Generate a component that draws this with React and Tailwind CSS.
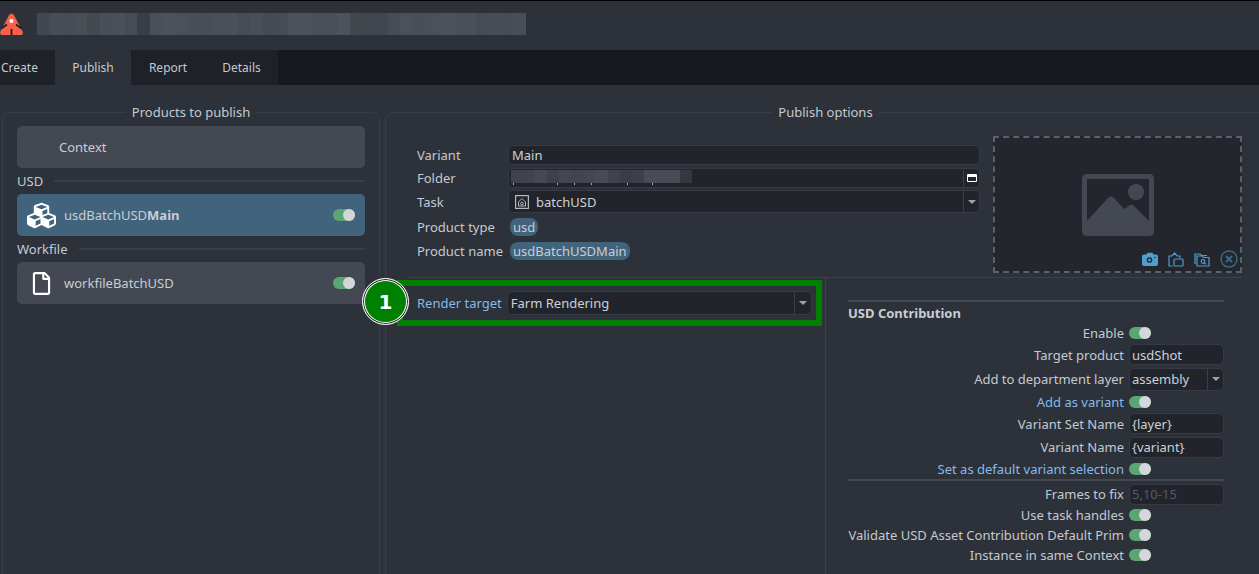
import React from "react";
import { FaCubes, FaRegFile } from "react-icons/fa";

const mosaicA = ["#43474f","#484c55","#474b54","#4a4e57","#44484f","#4a4e57","#4b4f58","#474b53"];
const mosaicDark = ["#393d45"];
const mosaicB = ["#4b4f58","#4d515a","#4c5059","#4a4e57","#494d56","#4b4f58","#4c5059","#474b54","#4a4e57","#464a52","#474b54","#4d515a","#4d515a","#4a4e57","#4b4f58","#4e525a","#43474e","#42464e","#42464e","#474b53","#4c5059","#4a4e57","#4c5059","#4d515a","#4c5059","#4b4f58","#474b54","#484c55","#474b54","#4a4e57"];
const folderMosaic = ["#3f434b","#40444c","#454952","#3d4149","#43474f","#41454d","#43474f","#474b53","#3f434b","#393d45","#3c4048","#494c54","#494c54","#494c54","#35393f"];
const ticks = ["ml-[2px]","ml-[43px]","ml-[16px]","ml-[16px]","ml-[35px]","ml-[24px]"];

function Toggle() {
  return (
    <div className="flex h-[12px] w-[22px] shrink-0 items-center justify-end rounded-full bg-[#5ba572]">
      <div className="h-[12px] w-[12px] rounded-full bg-[#d4d6dc]" />
    </div>
  );
}

function Caret() {
  return <div className="h-0 w-0 border-x-[4px] border-t-[4px] border-x-transparent border-t-[#9da1a9]" />;
}

function Field({ children, className = "" }) {
  return <div className={`flex items-center rounded-[5px] border border-[#353a45] bg-[#21252b] ${className}`}>{children}</div>;
}

function Select({ label, className = "", labelClass = "", arrowW = "w-[17px]" }) {
  return (
    <Field className={className}>
      <span className={`flex-1 text-[#ccd0d7] ${labelClass}`}>{label}</span>
      <div className={`flex h-full ${arrowW} items-center justify-center border-l border-[#3a3f4a]`}><Caret /></div>
    </Field>
  );
}

function Divider({ title }) {
  return (
    <div className="flex h-[26px] items-center gap-[11px] text-[#c5c9d0]">
      <span>{title}</span>
      <div className="h-[2px] flex-1 bg-[#383d48]" />
    </div>
  );
}

function Product({ icon, children, active }) {
  return (
    <div className={`flex h-[42px] items-center rounded-[5px] ${active ? "bg-[#41637b]" : "bg-[#434853]"} pr-[10px]`}>
      <div className="flex w-[47px] justify-center pl-[1px] text-white">{icon}</div>
      <span className="flex-1 text-[#c9cdd4]">{children}</span>
      <Toggle />
    </div>
  );
}

function Row({ label, h, blue, children }) {
  return (
    <div className={`flex items-center justify-end ${h}`}>
      <span className={`whitespace-nowrap ${blue ? "text-[#85bbe8]" : "text-[#c5c9d0]"}`}>{label}</span>
      <div className="ml-[5px] flex w-[95px] items-center">{children}</div>
    </div>
  );
}

function FormRow({ label, h, children }) {
  return (
    <div className={`flex items-center ${h}`}>
      <span className="w-[91px] shrink-0 whitespace-nowrap text-[#c5c9d0]">{label}</span>
      {children}
    </div>
  );
}

function Pill({ children }) {
  return <span className="rounded-[8px] bg-[#41637b] px-[3px] leading-[17px] text-[#c9cdd4]">{children}</span>;
}

function Logo() {
  return (
    <svg width="23" height="23" viewBox="0 0 23 23" className="shrink-0">
      <path d="M9 2.200 Q11.500 -1 14 2.200 L22.400 18 Q24 22 20 22 L3 22 Q-1 22 .6 18 Z" fill="#f9604a" />
      <circle cx="11.500" cy="8" r="2" fill="#fff" />
      <path d="M1.500 15.500 L7 11.500 M21.500 15.500 L16 11.500 M11.500 16 V22" stroke="#1d1f25" strokeWidth="1.800" fill="none" />
    </svg>
  );
}

function ImagePlaceholder() {
  return (
    <svg width="72" height="62" viewBox="0 0 72 62">
      <path fillRule="evenodd" d="M5 0H67Q72 0 72 5V57Q72 62 67 62H5Q0 62 0 57V5Q0 0 5 0ZM5 5V47L26 24Q29 21 32 24L42 35L48 31Q50 30 52 32L67 47V5Z" fill="#434853" />
      <circle cx="54" cy="18" r="8" fill="#434853" />
    </svg>
  );
}

function CameraIcon() {
  return (
    <svg width="16" height="14" viewBox="0 0 16 14">
      <path d="M2 2.500H4.500L5.500 .8H10.500L11.500 2.500H14Q16 2.500 16 4.500V12Q16 14 14 14H2Q0 14 0 12V4.500Q0 2.500 2 2.500Z" fill="#4f9fcf" />
      <circle cx="7.500" cy="8" r="2.800" fill="#21252b" />
      <circle cx="7.500" cy="8" r="1.500" fill="#4f9fcf" />
      <circle cx="13" cy="5.500" r=".8" fill="#21252b" />
    </svg>
  );
}

function ClipIcon() {
  return (
    <svg width="16" height="15" viewBox="0 0 16 15" fill="none" stroke="#4f9fcf" strokeWidth="1.200">
      <path d="M4.500 14H1V4H4L6.500 1L9 4H12V6" />
      <rect x="6" y="7" width="9" height="7" rx="1" />
    </svg>
  );
}

function FolderIcon() {
  return (
    <svg width="16" height="15" viewBox="0 0 16 15" fill="none" stroke="#4f9fcf" strokeWidth="1.200">
      <path d="M1 12V2H6L7.500 3.500H13" />
      <path d="M3 14V4H8L9.500 5.500H15V14Z" />
      <circle cx="9" cy="9.500" r="1.800" />
      <path d="M10.300 10.800L12 12.300" />
    </svg>
  );
}

function CloseIcon() {
  return (
    <svg width="18" height="18" viewBox="0 0 18 18" fill="none" stroke="#3a6a86">
      <circle cx="9" cy="9" r="8" strokeWidth="1.400" />
      <path d="M6 6L12 12M12 6L6 12" strokeWidth="2" />
    </svg>
  );
}

function TaskIcon() {
  return (
    <svg width="14" height="14" viewBox="0 0 14 14" fill="none" stroke="#b4b8c0" className="mr-[7px] ml-[6px]">
      <rect x=".5" y=".5" width="13" height="13" strokeWidth="1" fill="#434853" />
      <rect x="2" y="2" width="10" height="10" strokeWidth="0" fill="#21252b" />
      <path d="M3.500 11V7L7 3.500L10.500 7V11Z" strokeWidth="1" />
      <circle cx="7" cy="8.500" r="1.300" strokeWidth="1" />
    </svg>
  );
}

export default function App() {
  return (
    <div className="relative h-[574px] w-[1259px] overflow-hidden border-t border-black bg-[#2c313a] text-[13px] leading-[18px] font-['Noto_Sans',sans-serif]">
      <header className="flex h-[49px] items-start pt-[12px]">
        <Logo />
        <div className="ml-[14px] flex h-[22px] w-[489px] overflow-hidden">
          {[...mosaicA, ...mosaicDark, ...mosaicB].map((c, i) => (
            <div key={i} className="h-full flex-1" style={{ backgroundColor: c }} />
          ))}
        </div>
      </header>

      <nav className="flex h-[35px] bg-[#16191d] text-[12px] text-[#c5c9d0]">
        <div className="flex w-[55px] items-center bg-[#1e2128] pl-[1px]">Create</div>
        <div className="flex w-[76px] items-center justify-center bg-[#2c313a]">Publish</div>
        <div className="flex w-[74px] items-center justify-center bg-[#1e2128]">Report</div>
        <div className="flex w-[73px] items-center justify-center bg-[#1e2128]">Details</div>
      </nav>

      <main className="flex gap-[5px] pt-[18px] pl-[2px]">
        <fieldset className="h-[480px] w-[378px] shrink-0 rounded-[8px] border border-[#383d48] px-[14px]">
          <legend className="mx-auto px-[6px] text-[#c5c9d0]">Products to publish</legend>
          <div className="pt-[5px]">
            <div className="flex h-[42px] items-center rounded-[5px] bg-[#434853] pl-[42px] text-[#c9cdd4]">Context</div>
            <Divider title="USD" />
            <Product active icon={<FaCubes size={29} />}>usdBatchUSD<b className="font-bold">Main</b></Product>
            <Divider title="Workfile" />
            <Product icon={<FaRegFile size={23} />}>workfileBatchUSD</Product>
          </div>
        </fieldset>

        <fieldset className="h-[480px] w-[880px] shrink-0 rounded-tl-[8px] border-t border-l border-[#383d48]">
          <legend className="mx-auto px-[6px] text-[#c5c9d0]">Publish options</legend>

          <div className="ml-[22px] flex h-[157px] w-[834px] border-b border-[#3b404b] pt-[22px]">
            <div className="ml-[9px] w-[576px] shrink-0">
              <FormRow label="Variant" h="h-[23px]">
                <Field className="h-[20px] w-[472px] pl-[3px] text-[#ccd0d7]">Main</Field>
              </FormRow>
              <FormRow label="Folder" h="h-[23px]">
                <Field className="h-[20px] w-[472px] overflow-hidden pl-[2px]">
                  <div className="w-[181px]">
                    <div className="flex h-[13px]">
                      {folderMosaic.map((c, i) => <div key={i} className="h-full flex-1" style={{ backgroundColor: c }} />)}
                    </div>
                    <div className="flex h-[2px]">
                      {ticks.map((m, i) => <div key={i} className={`h-[2px] w-[1px] bg-[#a8abb1] ${m}`} />)}
                    </div>
                  </div>
                  <div className="ml-auto flex h-full w-[16px] items-center justify-center border-l border-[#3a3f4a]">
                    <div className="h-[8px] w-[10px] rounded-[1px] border border-t-[3px] border-white" />
                  </div>
                </Field>
              </FormRow>
              <FormRow label="Task" h="h-[25px]">
                <Field className="h-[23px] w-[472px]">
                  <TaskIcon />
                  <span className="flex-1 text-[#ccd0d7]">batchUSD</span>
                  <div className="flex h-full w-[16px] items-center justify-center border-l border-[#3a3f4a]"><Caret /></div>
                </Field>
              </FormRow>
              <FormRow label="Product type" h="h-[25px]"><div className="ml-[2px]"><Pill>usd</Pill></div></FormRow>
              <FormRow label="Product name" h="h-[23px]"><div className="ml-[2px]"><Pill>usdBatchUSDMain</Pill></div></FormRow>
            </div>
            <div className="relative -mt-[7px] flex h-[137px] w-[249px] shrink-0 items-center justify-center border-2 border-dashed border-[#5b606b] bg-[#23262d]">
              <ImagePlaceholder />
              <div className="absolute right-[2px] bottom-[3px] flex items-center gap-[10px]">
                <CameraIcon />
                <ClipIcon />
                <FolderIcon />
                <CloseIcon />
              </div>
            </div>
          </div>

          <div className="flex">
            <div className="ml-[11px] h-[46px] w-[425px] shrink-0 translate-y-[2px]">
              <div className="flex h-full items-center border-[6px] border-[#008000] pr-[4px] pl-[14px]">
                <span className="whitespace-nowrap text-[#85bbe8]">Render target</span>
                <Select label="Farm Rendering" className="ml-[5px] h-[24px] flex-1 pl-[3px]" />
              </div>
            </div>
            <div className="ml-[3px] h-[300px] w-[1px] bg-[#3b404b]" />
            <div className="ml-[22px] w-[376px] pt-[22px]">
              <div className="h-[2px] bg-[#434853]" />
              <div className="h-[20px] pt-[1px] font-bold leading-[20px] text-[#c9cdd4]">USD Contribution</div>
              <Row label="Enable" h="h-[21px]"><Toggle /></Row>
              <Row label="Target product" h="h-[23px]"><Field className="h-[21px] w-full pl-[2px] text-[#ccd0d7]">usdShot</Field></Row>
              <Row label="Add to department layer" h="h-[26px]"><Select label="assembly" className="h-[23px] w-full pl-[2px]" arrowW="w-[16px]" /></Row>
              <Row label="Add as variant" h="h-[20px]" blue><Toggle /></Row>
              <Row label="Variant Set Name" h="h-[23px]"><Field className="h-[21px] w-full pl-[2px] text-[#ccd0d7]">{"{layer}"}</Field></Row>
              <Row label="Variant Name" h="h-[24px]"><Field className="h-[21px] w-full pl-[2px] text-[#ccd0d7]">{"{variant}"}</Field></Row>
              <Row label="Set as default variant selection" h="h-[19px]" blue><Toggle /></Row>
              <div className="mt-[1px] mb-[2px] h-[2px] bg-[#434853]" />
              <Row label="Frames to fix" h="h-[22px]"><Field className="h-[21px] w-full pl-[2px] text-[#555a64]">5,10-15</Field></Row>
              <Row label="Use task handles" h="h-[20px]"><Toggle /></Row>
              <Row label="Validate USD Asset Contribution Default Prim" h="h-[20px]"><Toggle /></Row>
              <Row label="Instance in same Context" h="h-[20px]"><Toggle /></Row>
            </div>
          </div>
        </fieldset>
      </main>

      <div className="absolute top-[277px] left-[362px] flex h-[47px] w-[47px] items-center justify-center rounded-full border border-white bg-[#008000] font-['DejaVu_Sans',sans-serif] text-[20px] font-bold text-white shadow-[inset_0_0_0_1px_#222,inset_0_0_0_2px_#fff]">1</div>
    </div>
  );
}
